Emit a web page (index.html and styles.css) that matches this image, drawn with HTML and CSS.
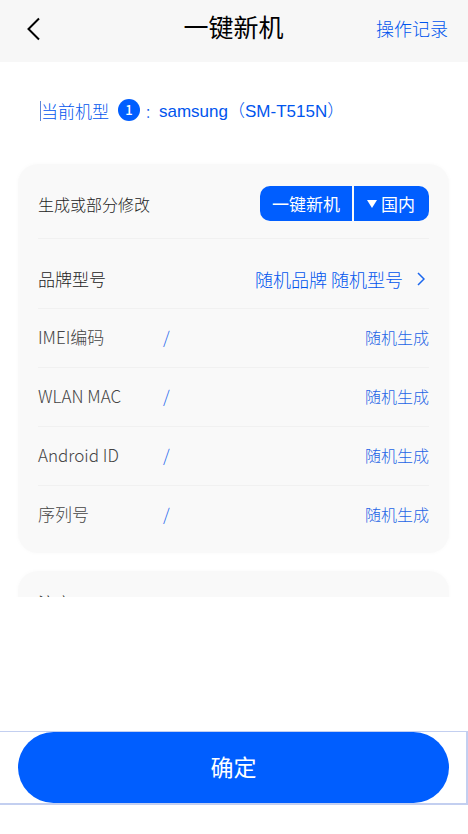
FILE: index.html
```
<!DOCTYPE html>
<html lang="zh-CN">
<head>
<meta charset="UTF-8">
<meta name="viewport" content="width=device-width, initial-scale=1">
<title>一键新机</title>
<link rel="stylesheet" href="styles.css">
</head>
<body>
	<header class="header">
		<button type="button" class="back" aria-label="返回">
			<svg width="14" height="24" viewBox="0 0 14 24" fill="none" stroke="#000" stroke-width="2">
				<path d="M13 1.5 L2.5 12 L13 22.5"/>
			</svg>
		</button>
		<h1 class="title">一键新机</h1>
		<a href="#" class="record">操作记录</a>
	</header>

	<main class="content">
		<p class="device">
			<span class="caret"></span>
			<span>当前机型</span>
			<span class="badge">1</span>
			<span class="colon">:</span>
			<span class="model">samsung（SM-T515N）</span>
		</p>

		<section class="card">
			<div class="row row-top">
				<label for="region" class="label-small">生成或部分修改</label>
				<div class="btns">
					<button type="button" class="btn-new">一键新机</button>
					<div class="region">
						<svg width="10" height="8" viewBox="0 0 10 8"><path d="M0 0 H10 L5 8 Z" fill="#fff"/></svg>
						<select id="region">
							<option>国内</option>
							<option>国外</option>
						</select>
					</div>
				</div>
			</div>
			<div class="row row-brand">
				<span class="label">品牌型号</span>
				<a href="#" class="brand">随机品牌 随机型号
					<svg width="8" height="14" viewBox="0 0 8 14" fill="none" stroke="#1a66ee" stroke-width="1.5"><path d="M1 1 L7 7 L1 13"/></svg>
				</a>
			</div>
			<div class="row">
				<span class="name">IMEI编码</span>
				<span class="value">/</span>
				<button type="button" class="random">随机生成</button>
			</div>
			<div class="row">
				<span class="name">WLAN MAC</span>
				<span class="value">/</span>
				<button type="button" class="random">随机生成</button>
			</div>
			<div class="row">
				<span class="name">Android ID</span>
				<span class="value">/</span>
				<button type="button" class="random">随机生成</button>
			</div>
			<div class="row">
				<span class="name">序列号</span>
				<span class="value">/</span>
				<button type="button" class="random">随机生成</button>
			</div>
		</section>

		<section class="card card-note">
			<p class="label">注意</p>
		</section>
	</main>

	<footer class="footer">
		<button type="button" class="submit">确定</button>
	</footer>
</body>
</html>
```
FILE: styles.css
```
* {
	box-sizing: border-box;
}

body {
	display: flex;
	flex-direction: column;
	height: 100vh;
	margin: 0;
	background-color: #fff;
	color: #222;
	font-family: "Noto Sans CJK SC", sans-serif;
	font-size: 17px;
	line-height: 24px;
}

p, h1 {
	margin: 0;
}

a {
	color: #0055ee;
	text-decoration: none;
}

button, select {
	border: 0;
	padding: 0;
	background: none;
	font-family: inherit;
	font-size: 17px;
	line-height: 24px;
	cursor: pointer;
}

/* 顶部 */
.header {
	display: grid;
	grid-template-columns: 1fr auto 1fr;
	align-items: center;
	flex: none;
	padding: 8px 20px 18px 26px;
	background-color: #f7f7f7;
}

.back {
	display: flex;
	justify-self: start;
	padding-top: 6px;
}

.title {
	margin-right: 7px;
	color: #000;
	font-size: 25px;
	font-weight: 400;
	line-height: 36px;
}

.record {
	justify-self: end;
	padding-top: 4px;
	font-size: 18px;
	font-weight: 300;
}

/* 中间内容 */
.content {
	flex: 1;
	min-height: 0;
	overflow: hidden;
	padding: 36px 19px 0 18px;
}

.device {
	display: flex;
	align-items: center;
	padding-left: 22px;
	margin-bottom: 40px;
	height: 26px;
	color: #0055ee;
	font-weight: 300;
}

.caret {
	width: 1px;
	height: 20px;
	background-color: #5c86d8;
}

.badge {
	width: 22px;
	height: 22px;
	margin: 0 6px 2px 9px;
	border-radius: 50%;
	background-color: #005eff;
	color: #fff;
	font-size: 13px;
	font-weight: 500;
	line-height: 22px;
	text-align: center;
}

.colon {
	width: 13px;
}

.model {
	padding-top: 2px;
	font-family: "Liberation Sans", "Noto Sans CJK SC", sans-serif;
}

.card {
	padding: 0 20px;
	margin-bottom: 18px;
	border-radius: 20px;
	background-color: #f9f9f9;
	box-shadow: 0 0 4px #f9f9f9;
}

.row {
	display: flex;
	align-items: center;
	height: 59px;
	padding-bottom: 2px;
	border-bottom: 1px solid #f1f1f1;
}

.row:last-child {
	height: 67px;
	padding-bottom: 11px;
	border-bottom: 0;
}

.row-top {
	justify-content: space-between;
	height: 75px;
	padding-top: 5px;
	padding-bottom: 0;
}

.row-brand {
	justify-content: space-between;
	height: 70px;
	padding-top: 13px;
}

.label-small {
	font-size: 16px;
	font-weight: 300;
}

.label {
	font-weight: 300;
}

.name {
	width: 125px;
	color: #444;
	font-weight: 300;
}

.value {
	flex: 1;
	color: #2a6cee;
	font-weight: 300;
}

.random {
	color: #2464e6;
	font-size: 16px;
	font-weight: 300;
}

.btns {
	display: flex;
	gap: 2px;
	height: 35px;
}

.btn-new {
	padding: 0 12px;
	border-radius: 10px 0 0 10px;
	background-color: #005eff;
	color: #fff;
}

.region {
	display: flex;
	align-items: center;
	gap: 4px;
	padding: 0 14px 0 13px;
	border-radius: 0 10px 10px 0;
	background-color: #005eff;
}

.region select {
	appearance: none;
	color: #fff;
}

.region option {
	color: #333;
}

.brand {
	display: flex;
	align-items: center;
	gap: 14px;
	padding-right: 4px;
	font-size: 18px;
	font-weight: 300;
}

.card-note {
	padding: 20px;
}

/* 底部按钮 */
.footer {
	flex: none;
	margin: 134px 0 29px;
	padding: 0 17px 0 18px;
	border: solid #c3cff0;
	border-width: 1px 2px 2px 0;
}

.submit {
	display: block;
	width: 100%;
	height: 71px;
	padding-bottom: 4px;
	border-radius: 36px;
	background-color: #005eff;
	color: #fff;
	font-size: 23px;
}
```
